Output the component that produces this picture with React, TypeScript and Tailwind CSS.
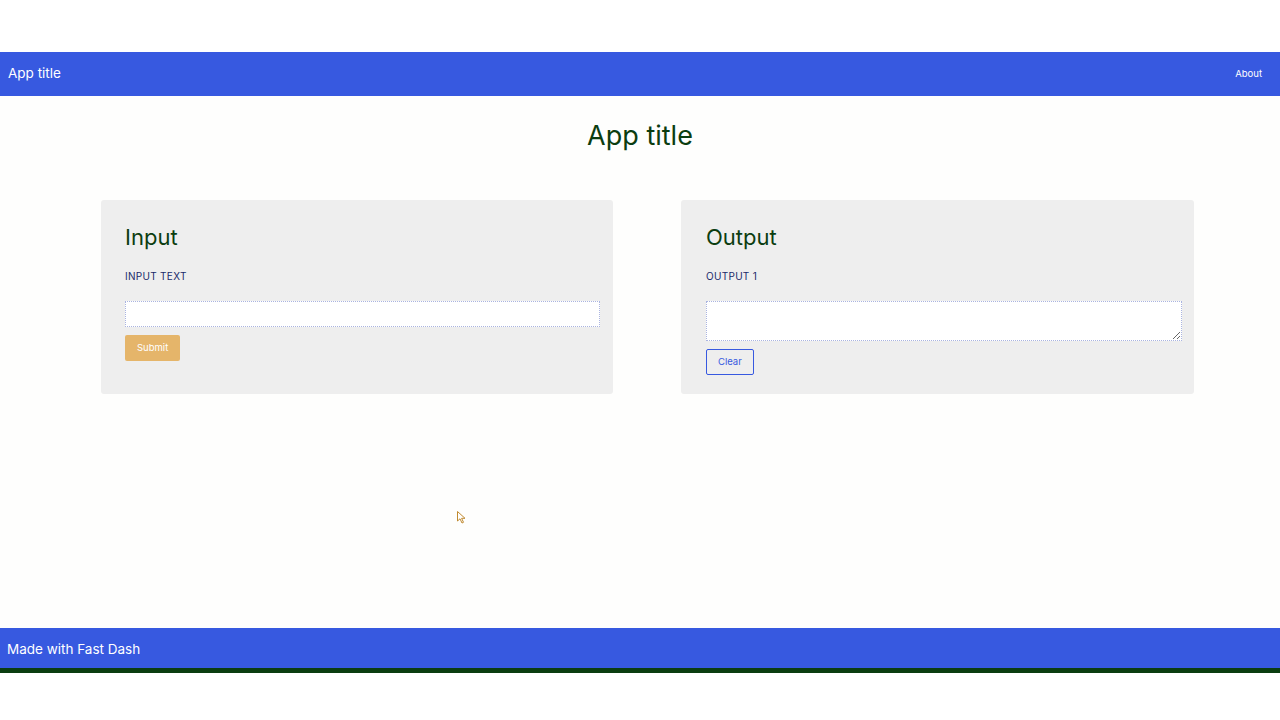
export default function App() {
  return (
    <div className="w-[1280px] h-[720px] bg-[#fefefd] flex flex-col font-['Inter','Liberation_Sans',sans-serif]">
      <div className="h-[52px] bg-white" />
      <nav className="h-[44px] bg-[#3759e0] flex items-center justify-between pl-[8px] pr-[18px]">
        <span className="text-white text-[13.5px] -mt-[1px]">App title</span>
        <span className="text-white text-[9.5px]">About</span>
      </nav>
      <h1 className="text-center text-[27px] text-[#0b3d10] mt-[24px] leading-[32px]">App title</h1>
      <div className="flex pl-[101px] pr-[86px] gap-[68px] mt-[48px]">
        <div className="w-[512px] h-[194px] bg-[#eeeeee] rounded-[3px] pl-[24px] pr-[13px] pt-[24px]">
          <h2 className="text-[22px] text-[#0b3d10] leading-[26px]">Input</h2>
          <div className="mt-[19px] text-[10px] tracking-[0.3px] text-[#1a2a6a]">INPUT TEXT</div>
          <input className="mt-[17px] block w-full h-[26px] bg-white border border-dotted border-[#aab4e0] outline-none" />
          <button className="mt-[8px] h-[26px] px-[12px] pt-[1px] bg-[#e5b56a] rounded-[2px] text-white text-[9.5px]">Submit</button>
        </div>
        <div className="w-[513px] h-[194px] bg-[#eeeeee] rounded-[3px] pl-[25px] pr-[12px] pt-[24px]">
          <h2 className="text-[22px] text-[#0b3d10] leading-[26px]">Output</h2>
          <div className="mt-[19px] text-[10px] tracking-[0.3px] text-[#1a2a6a]">OUTPUT 1</div>
          <textarea className="mt-[17px] block w-full h-[40px] bg-white border border-dotted border-[#aab4e0] outline-none resize-y" />
          <button className="mt-[8px] h-[26px] px-[11px] pt-[1px] border border-[#3759e0] rounded-[2px] text-[#3759e0] text-[9.5px]">Clear</button>
        </div>
      </div>
      <div className="flex-1 relative">
        <svg className="absolute left-[457px] top-[117px]" width="9" height="13" viewBox="0 0 9 13">
          <path d="M0.5 0.5 L0.5 10 L3 7.8 L5 12 L6.5 11.3 L4.6 7.3 L8 7.3 Z" fill="white" stroke="#c08a30" strokeWidth="1" />
        </svg>
      </div>
      <footer className="h-[40px] bg-[#3759e0] flex items-center px-[7px]">
        <span className="text-white text-[13.5px] mt-[2px]">Made with Fast Dash</span>
      </footer>
      <div className="h-[5px] bg-[#0b3d10]" />
      <div className="h-[47px] bg-white" />
    </div>
  );
}
